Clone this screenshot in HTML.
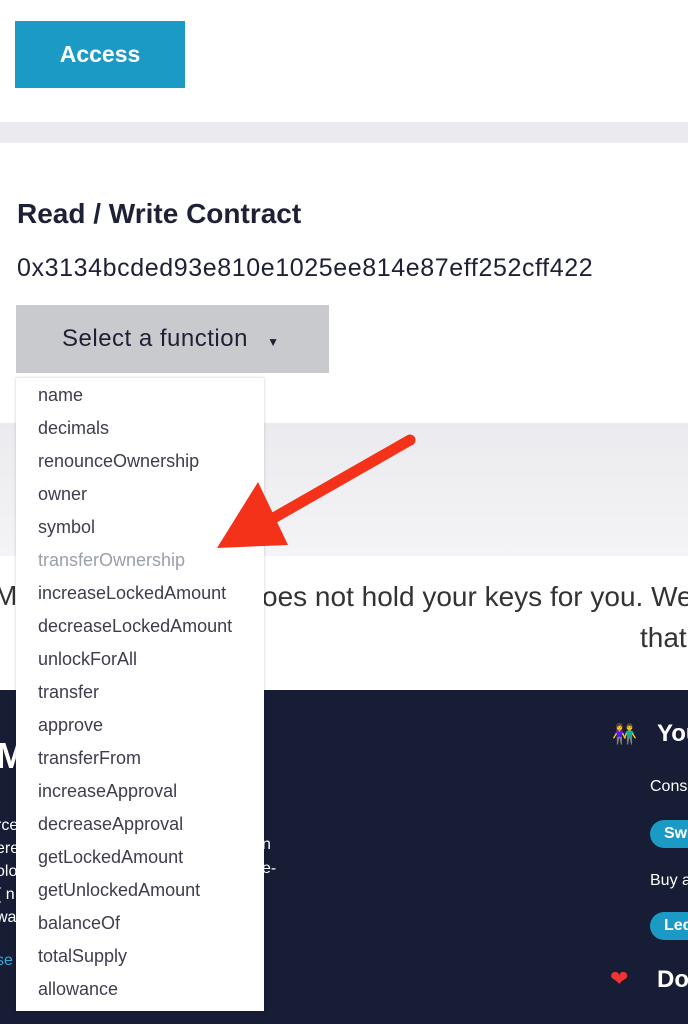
<html><head><style>
body{margin:0;width:688px;height:1024px;overflow:hidden;font-family:"Liberation Sans",sans-serif;background:#fff;position:relative}
.a{position:absolute;white-space:nowrap}
.dd div{height:33px;line-height:33px;padding-left:22px;font-size:18px;color:#3d3d4e}
</style></head><body>
<div class="a" style="left:15px;top:21px;width:170px;height:67px;background:#1a9ac5;color:#fff;font-size:23px;font-weight:bold;text-align:center;line-height:67px">Access</div>
<div class="a" style="left:0;top:122px;width:688px;height:21px;background:#ebebef"></div>
<div class="a" style="left:17px;top:198px;font-size:28px;font-weight:bold;color:#1e2035">Read / Write Contract</div>
<div class="a" style="left:17px;top:254px;font-size:25px;letter-spacing:.6px;color:#1e2035">0x3134bcded93e810e1025ee814e87eff252cff422</div>
<div class="a" style="left:16px;top:305px;width:313px;height:68px;background:#c9cacd;color:#1e2035;font-size:24px;line-height:68px;padding-left:46px;box-sizing:border-box;letter-spacing:.5px">Select a function <span style="font-size:12px;margin-left:12px">▼</span></div>
<div class="a" style="left:0;top:423px;width:688px;height:133px;background:linear-gradient(#ebebef,#f4f4f6)"></div>
<div class="a" style="left:-6px;top:580px;font-size:28px;color:#333">My</div>
<div class="a" style="left:262px;top:581px;font-size:28px;color:#333">oes not hold your keys for you. We</div>
<div class="a" style="left:640px;top:622px;font-size:28px;color:#333">that</div>
<div class="a" style="left:0;top:690px;width:688px;height:334px;background:#161d35"></div>
<div class="a" style="left:-4px;top:735px;font-size:36px;font-weight:bold;color:#fff">My</div>
<div class="a" style="left:-4px;top:814px;font-size:16px;color:#fff;line-height:23px">rce<br>ere<br>olo<br>( n<br>wa</div>
<div class="a" style="left:-4px;top:952px;font-size:16px;color:#3aa7d8">se</div>
<div class="a" style="left:262px;top:836px;font-size:16px;color:#fff">n</div>
<div class="a" style="left:262px;top:860px;font-size:16px;color:#fff">e-</div>
<div class="a" style="left:612px;top:722px;font-size:20px">👫</div>
<div class="a" style="left:657px;top:720px;font-size:24px;font-weight:bold;color:#fff">You</div>
<div class="a" style="left:650px;top:778px;font-size:16px;color:#fff">Cons</div>
<div class="a" style="left:650px;top:820px;width:60px;height:28px;border-radius:14px;background:#1a9ac5;color:#fff;font-size:16px;font-weight:bold;line-height:28px;padding-left:14px">Sw</div>
<div class="a" style="left:650px;top:872px;font-size:16px;color:#fff">Buy a</div>
<div class="a" style="left:650px;top:912px;width:60px;height:28px;border-radius:14px;background:#1a9ac5;color:#fff;font-size:16px;font-weight:bold;line-height:28px;padding-left:14px">Led</div>
<div class="a" style="left:610px;top:966px;font-size:22px;color:#e33">❤</div>
<div class="a" style="left:657px;top:966px;font-size:24px;font-weight:bold;color:#fff">Do</div>
<div class="a dd" style="left:16px;top:378px;width:248px;height:632px;background:#fff;box-shadow:0 0 3px rgba(0,0,0,.2);padding-top:1px">
<div>name</div><div>decimals</div><div>renounceOwnership</div><div>owner</div><div>symbol</div><div style="color:#9aa0a8">transferOwnership</div><div>increaseLockedAmount</div><div>decreaseLockedAmount</div><div>unlockForAll</div><div>transfer</div><div>approve</div><div>transferFrom</div><div>increaseApproval</div><div>decreaseApproval</div><div>getLockedAmount</div><div>getUnlockedAmount</div><div>balanceOf</div><div>totalSupply</div><div>allowance</div>
</div>
<svg class="a" style="left:0;top:0" width="688" height="1024"><line x1="410" y1="440" x2="270" y2="520" stroke="#f4321a" stroke-width="11" stroke-linecap="round"/><polygon points="217,548 258,482 288,545" fill="#f4321a"/></svg>
</body></html>
